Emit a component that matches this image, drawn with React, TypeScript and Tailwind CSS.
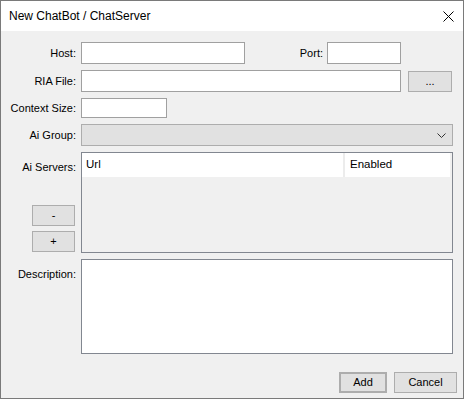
import React from "react";

const font = "font-['Liberation_Sans',Arial,sans-serif]";

function Label({ text, top }: { text: string; top?: boolean }) {
  return (
    <div
      className={
        "w-[75px] shrink-0 text-right text-[11px] leading-[13px] text-black " +
        (top ? "pt-[9px]" : "self-center")
      }
    >
      {text}
    </div>
  );
}

function WinButton({
  children,
  className,
}: {
  children: React.ReactNode;
  className?: string;
}) {
  return (
    <button
      className={
        "flex items-center justify-center bg-[#e1e1e1] border border-[#adadad] text-[11px] text-black " +
        (className ?? "")
      }
    >
      {children}
    </button>
  );
}

export default function App() {
  return (
    <div
      className={`w-[464px] h-[399px] border border-[#7a7a7a] bg-[#f0f0f0] flex flex-col ${font}`}
    >
      <div className="h-[30px] bg-white flex items-center justify-between pl-[8px] pr-[9px]">
        <span className="text-[12px] text-black">New ChatBot / ChatServer</span>
        <svg width="11" height="11" viewBox="0 0 11 11">
          <path d="M0.5 0.5 L10.5 10.5 M10.5 0.5 L0.5 10.5" stroke="#000" strokeWidth="1" />
        </svg>
      </div>

      <div className="flex flex-col gap-[6px] pt-[11px] pr-[10px]">
        {/* Host / Port */}
        <div className="flex h-[22px]">
          <Label text="Host:" />
          <input className="ml-[5px] w-[164px] h-[22px] bg-white border border-[#a0a0a0]" />
          <div className="w-[78px] self-center text-right text-[11px] leading-[13px]">Port:</div>
          <input className="ml-[4px] w-[74px] h-[22px] bg-white border border-[#a0a0a0]" />
        </div>

        {/* RIA File */}
        <div className="flex h-[22px] items-center">
          <Label text="RIA File:" />
          <input className="ml-[5px] w-[320px] h-[22px] bg-white border border-[#a0a0a0]" />
          <WinButton className="ml-[7px] w-[44px] h-[21px] leading-none">...</WinButton>
        </div>

        {/* Context Size */}
        <div className="flex h-[20px]">
          <Label text="Context Size:" />
          <input className="ml-[5px] w-[86px] h-[20px] bg-white border border-[#a0a0a0]" />
        </div>

        {/* Ai Group */}
        <div className="flex h-[22px]">
          <Label text="Ai Group:" />
          <div className="ml-[5px] flex-1 h-[22px] bg-[#e1e1e1] border border-[#adadad] flex items-center justify-end pr-[6px]">
            <svg width="9" height="5" viewBox="0 0 9 5">
              <path d="M0.5 0.5 L4.5 4.5 L8.5 0.5" fill="none" stroke="#333" strokeWidth="1" />
            </svg>
          </div>
        </div>

        {/* Ai Servers */}
        <div className="flex h-[101px]">
          <div className="w-[75px] shrink-0 flex flex-col items-end justify-between pb-[1px]">
            <div className="text-[11px] leading-[13px] pt-[9px]">Ai Servers:</div>
            <div className="flex flex-col gap-[5px] mr-[1px]">
              <WinButton className="w-[43px] h-[21px]">-</WinButton>
              <WinButton className="w-[43px] h-[21px]">+</WinButton>
            </div>
          </div>
          <div className="ml-[5px] flex-1 border border-[#828790] bg-[#f0f0f0] flex flex-col">
            <div className="flex h-[24px] bg-white mr-[2px] text-[11.5px] text-black">
              <div className="w-[263px] flex items-center pl-[4px] border-r-2 border-[#ececec]">Url</div>
              <div className="flex-1 flex items-center pl-[5px]">Enabled</div>
            </div>
          </div>
        </div>

        {/* Description */}
        <div className="flex h-[95px]">
          <Label text="Description:" top />
          <textarea className="ml-[5px] flex-1 h-[95px] bg-white border border-[#828790] resize-none" />
        </div>
      </div>

      <div className="flex justify-end gap-[7px] mt-[18px] pr-[6px]">
        <WinButton className="w-[48px] h-[21px] border-2 border-[#0078d7]">Add</WinButton>
        <WinButton className="w-[63px] h-[21px]">Cancel</WinButton>
      </div>
    </div>
  );
}
